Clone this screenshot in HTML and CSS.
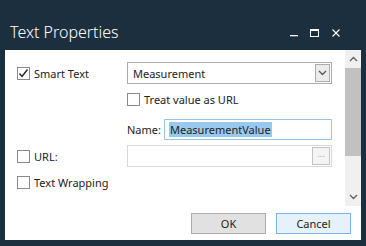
FILE: index.html
```html
<!DOCTYPE html>
<html>
<head>
    <title>Text Properties</title>
    <link rel="stylesheet" href="styles.css">
</head>
<body>
    <div class="titlebar">
        <div class="title">Text Properties</div>
        <div class="controls">
            <svg class="ctl ctl-min" width="8" height="8" viewBox="0 0 8 8"><rect x="0" y="6" width="8" height="1.3" fill="#fff"/></svg>
            <svg class="ctl ctl-max" width="9" height="8" viewBox="0 0 9 8"><rect x="0.5" y="0.5" width="8" height="7" fill="none" stroke="#fff" stroke-width="1"/><rect x="0.5" y="0.5" width="8" height="1.5" fill="#fff"/></svg>
            <svg class="ctl ctl-close" width="8" height="8" viewBox="0 0 8 8"><path d="M0.5 0.5 L7.5 7.5 M7.5 0.5 L0.5 7.5" stroke="#fff" stroke-width="1.1" fill="none"/></svg>
        </div>
    </div>

    <div class="client">
        <div class="main">
            <div class="content">
                <div class="row row-1">
                    <label class="left check">
                        <span class="box checked">
                            <svg width="11" height="11" viewBox="0 0 11 11"><path d="M1.5 5.5 L4 8.5 L9.5 1.5" stroke="#222" stroke-width="1.4" fill="none"/></svg>
                        </span>
                        Smart Text
                    </label>
                    <div class="combo">
                        <span class="combo-text">Measurement</span>
                        <span class="combo-btn">
                            <svg width="9" height="6" viewBox="0 0 9 6"><path d="M1 1 L4.5 4.5 L8 1" stroke="#555" stroke-width="1.3" fill="none"/></svg>
                        </span>
                    </div>
                </div>

                <div class="row row-2">
                    <div class="left"></div>
                    <label class="check">
                        <span class="box"></span>
                        Treat value as URL
                    </label>
                </div>

                <div class="row row-3">
                    <div class="left"></div>
                    <div class="name-field">
                        <span class="name-label">Name:</span>
                        <div class="name-input"><span class="selected">MeasurementValue</span></div>
                    </div>
                </div>

                <div class="row row-4">
                    <label class="left check">
                        <span class="box"></span>
                        URL:
                    </label>
                    <div class="url-input">
                        <span class="browse">...</span>
                    </div>
                </div>

                <div class="row row-5">
                    <label class="left check">
                        <span class="box"></span>
                        Text Wrapping
                    </label>
                </div>
            </div>

            <div class="scrollbar">
                <div class="arrow">
                    <svg width="9" height="6" viewBox="0 0 9 6"><path d="M1 5 L4.5 1.5 L8 5" stroke="#606060" stroke-width="1.3" fill="none"/></svg>
                </div>
                <div class="thumb"></div>
                <div class="track"></div>
                <div class="arrow">
                    <svg width="9" height="6" viewBox="0 0 9 6"><path d="M1 1 L4.5 4.5 L8 1" stroke="#606060" stroke-width="1.3" fill="none"/></svg>
                </div>
            </div>
        </div>

        <div class="footer">
            <button class="btn">OK</button>
            <button class="btn btn-default">Cancel</button>
        </div>
    </div>
</body>
</html>
```

FILE: styles.css
```css
body {
    margin: 0;
    background-color: #1b2f3e;
    font-family: "Noto Sans", sans-serif;
    font-size: 11px;
    color: #222;
    width: 366px;
    height: 246px;
    overflow: hidden;
}
.titlebar {
    height: 50px;
    display: flex;
    align-items: center;
    padding: 0 26px 0 10px;
    box-sizing: border-box;
}
.title {
    color: #fff;
    font-size: 16px;
    font-weight: 300;
    padding-top: 14px;
}
.controls {
    margin-left: auto;
    display: flex;
    align-items: center;
    padding-top: 16px;
}
.ctl-max {
    margin-left: 12px;
}
.ctl-close {
    margin-left: 13px;
}
.client {
    background-color: #fff;
    margin: 0 5px;
    height: 190px;
}
.main {
    display: flex;
    height: 156px;
}
.content {
    flex: 1;
    padding-left: 12px;
    overflow: hidden;
}
.row {
    display: flex;
    align-items: center;
}
.row-1 {
    margin-top: 12px;
    height: 22px;
}
.row-2 {
    margin-top: 4px;
    height: 22px;
}
.row-3 {
    margin-top: 9px;
    height: 21px;
}
.row-4 {
    margin-top: 5px;
    height: 22px;
}
.row-5 {
    margin-top: 4px;
    height: 22px;
}
.left {
    width: 110px;
    flex: none;
}
.check {
    display: flex;
    align-items: center;
}
.box {
    width: 11px;
    height: 11px;
    border: 1px solid #8a8a8a;
    background-color: #fff;
    margin-right: 4px;
    display: flex;
    align-items: center;
    justify-content: center;
    flex: none;
}
.combo {
    width: 205px;
    height: 22px;
    box-sizing: border-box;
    border: 1px solid #acacac;
    display: flex;
    align-items: center;
    padding: 0 1px 0 5px;
}
.combo-text {
    flex: 1;
}
.combo-btn {
    width: 15px;
    height: 18px;
    box-sizing: border-box;
    border: 1px solid #acacac;
    background-color: #ececec;
    display: flex;
    align-items: center;
    justify-content: center;
}
.name-field {
    display: flex;
    align-items: center;
    width: 205px;
}
.name-label {
    width: 37px;
}
.name-input {
    flex: 1;
    height: 21px;
    box-sizing: border-box;
    border: 1px solid #99c4e6;
    display: flex;
    align-items: center;
    padding-left: 4px;
}
.selected {
    background-color: #99c9ef;
    line-height: 15px;
    padding: 0 1px;
}
.url-input {
    width: 205px;
    height: 22px;
    box-sizing: border-box;
    border: 1px solid #d9d9d9;
    display: flex;
    align-items: center;
    justify-content: flex-end;
    padding-right: 1px;
}
.browse {
    width: 18px;
    height: 18px;
    box-sizing: border-box;
    border: 1px solid #c4c4c4;
    background-color: #f4f4f4;
    color: #a8a8a8;
    font-size: 9px;
    line-height: 12px;
    text-align: center;
}
.scrollbar {
    width: 16px;
    background-color: #f0f0f0;
    display: flex;
    flex-direction: column;
}
.arrow {
    height: 18px;
    display: flex;
    align-items: center;
    justify-content: center;
}
.thumb {
    height: 88px;
    background-color: #c1c1c1;
}
.track {
    flex: 1;
}
.footer {
    display: flex;
    justify-content: flex-end;
    gap: 10px;
    padding: 7px 10px 0 0;
}
.btn {
    width: 75px;
    height: 21px;
    border: 1px solid #adadad;
    background-color: #e1e1e1;
    font-family: "Noto Sans", sans-serif;
    font-size: 11px;
    color: #222;
    padding: 0;
}
.btn-default {
    border-color: #7eb4ea;
    background-color: #e5f1fb;
}
```
